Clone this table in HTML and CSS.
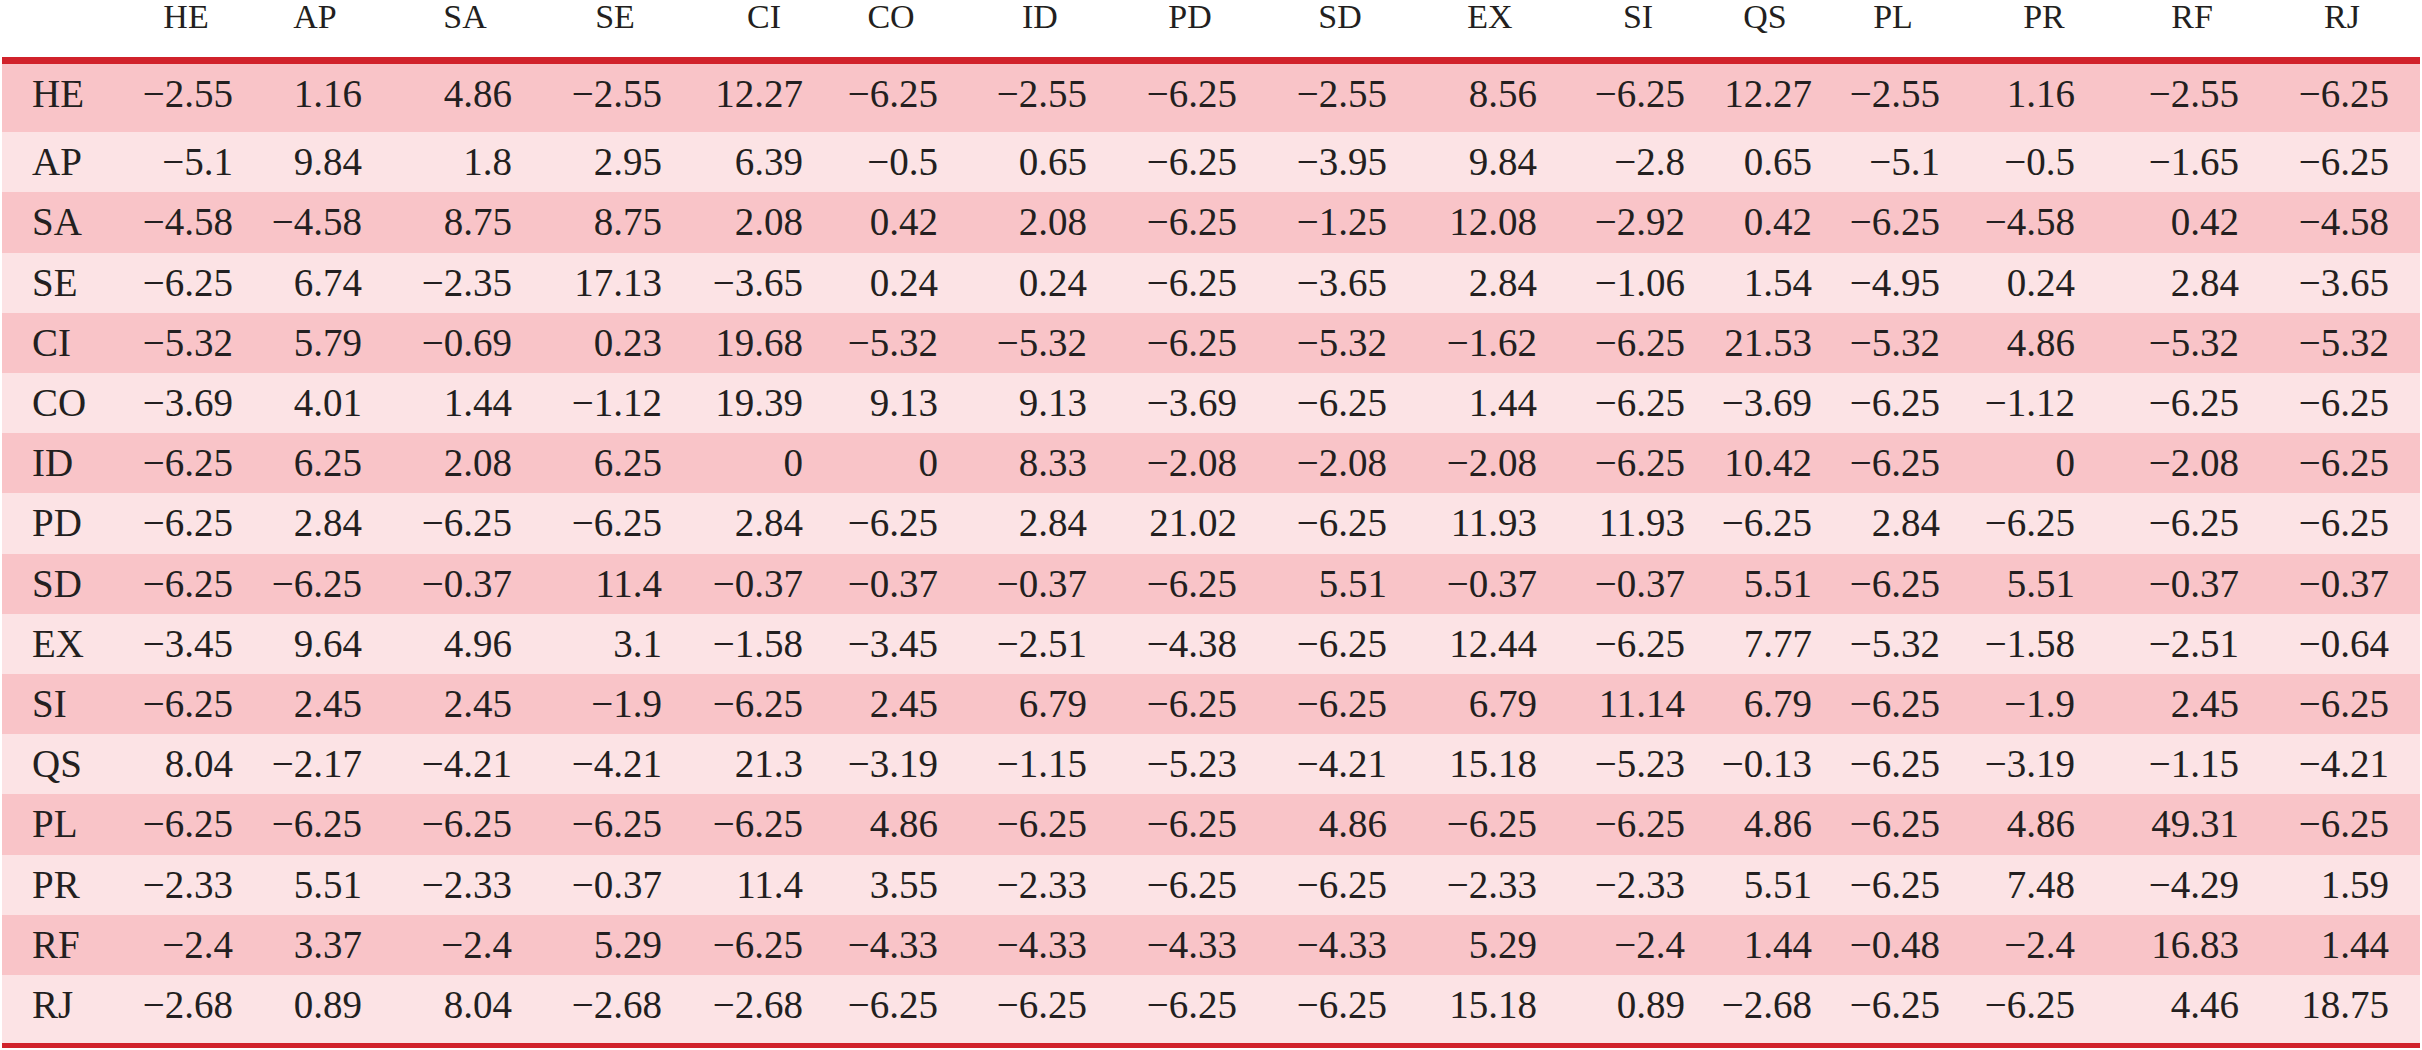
FILE: index.html
```html
<!DOCTYPE html>
<html lang="en">
<head>
<meta charset="utf-8">
<title>Matrix table</title>
<link rel="stylesheet" href="styles.css">
</head>
<body>
<div class="wrap">
<table class="matrix">
<colgroup>
<col class="c0"><col class="c1"><col class="c2"><col class="c3"><col class="c4"><col class="c5"><col class="c6"><col class="c7"><col class="c8"><col class="c9"><col class="c10"><col class="c11"><col class="c12"><col class="c13"><col class="c14"><col class="c15"><col class="c16">
</colgroup>
<thead>
<tr>
<th class="lab"></th>
<th><span class="hb">HE</span></th>
<th><span class="hb">AP</span></th>
<th><span class="hb">SA</span></th>
<th><span class="hb">SE</span></th>
<th><span class="hb hb-ci">CI</span></th>
<th><span class="hb">CO</span></th>
<th><span class="hb">ID</span></th>
<th><span class="hb">PD</span></th>
<th><span class="hb">SD</span></th>
<th><span class="hb">EX</span></th>
<th><span class="hb">SI</span></th>
<th><span class="hb">QS</span></th>
<th><span class="hb">PL</span></th>
<th><span class="hb hb-pr">PR</span></th>
<th><span class="hb">RF</span></th>
<th><span class="hb">RJ</span></th>
</tr>
</thead>
<tbody>
<tr class="dark"><td class="lab">HE</td><td>−2.55</td><td>1.16</td><td>4.86</td><td>−2.55</td><td>12.27</td><td>−6.25</td><td>−2.55</td><td>−6.25</td><td>−2.55</td><td>8.56</td><td>−6.25</td><td>12.27</td><td>−2.55</td><td>1.16</td><td>−2.55</td><td>−6.25</td></tr>
<tr class="light"><td class="lab">AP</td><td>−5.1</td><td>9.84</td><td>1.8</td><td>2.95</td><td>6.39</td><td>−0.5</td><td>0.65</td><td>−6.25</td><td>−3.95</td><td>9.84</td><td>−2.8</td><td>0.65</td><td>−5.1</td><td>−0.5</td><td>−1.65</td><td>−6.25</td></tr>
<tr class="dark"><td class="lab">SA</td><td>−4.58</td><td>−4.58</td><td>8.75</td><td>8.75</td><td>2.08</td><td>0.42</td><td>2.08</td><td>−6.25</td><td>−1.25</td><td>12.08</td><td>−2.92</td><td>0.42</td><td>−6.25</td><td>−4.58</td><td>0.42</td><td>−4.58</td></tr>
<tr class="light"><td class="lab">SE</td><td>−6.25</td><td>6.74</td><td>−2.35</td><td>17.13</td><td>−3.65</td><td>0.24</td><td>0.24</td><td>−6.25</td><td>−3.65</td><td>2.84</td><td>−1.06</td><td>1.54</td><td>−4.95</td><td>0.24</td><td>2.84</td><td>−3.65</td></tr>
<tr class="dark"><td class="lab">CI</td><td>−5.32</td><td>5.79</td><td>−0.69</td><td>0.23</td><td>19.68</td><td>−5.32</td><td>−5.32</td><td>−6.25</td><td>−5.32</td><td>−1.62</td><td>−6.25</td><td>21.53</td><td>−5.32</td><td>4.86</td><td>−5.32</td><td>−5.32</td></tr>
<tr class="light"><td class="lab">CO</td><td>−3.69</td><td>4.01</td><td>1.44</td><td>−1.12</td><td>19.39</td><td>9.13</td><td>9.13</td><td>−3.69</td><td>−6.25</td><td>1.44</td><td>−6.25</td><td>−3.69</td><td>−6.25</td><td>−1.12</td><td>−6.25</td><td>−6.25</td></tr>
<tr class="dark"><td class="lab">ID</td><td>−6.25</td><td>6.25</td><td>2.08</td><td>6.25</td><td>0</td><td>0</td><td>8.33</td><td>−2.08</td><td>−2.08</td><td>−2.08</td><td>−6.25</td><td>10.42</td><td>−6.25</td><td>0</td><td>−2.08</td><td>−6.25</td></tr>
<tr class="light"><td class="lab">PD</td><td>−6.25</td><td>2.84</td><td>−6.25</td><td>−6.25</td><td>2.84</td><td>−6.25</td><td>2.84</td><td>21.02</td><td>−6.25</td><td>11.93</td><td>11.93</td><td>−6.25</td><td>2.84</td><td>−6.25</td><td>−6.25</td><td>−6.25</td></tr>
<tr class="dark"><td class="lab">SD</td><td>−6.25</td><td>−6.25</td><td>−0.37</td><td>11.4</td><td>−0.37</td><td>−0.37</td><td>−0.37</td><td>−6.25</td><td>5.51</td><td>−0.37</td><td>−0.37</td><td>5.51</td><td>−6.25</td><td>5.51</td><td>−0.37</td><td>−0.37</td></tr>
<tr class="light"><td class="lab">EX</td><td>−3.45</td><td>9.64</td><td>4.96</td><td>3.1</td><td>−1.58</td><td>−3.45</td><td>−2.51</td><td>−4.38</td><td>−6.25</td><td>12.44</td><td>−6.25</td><td>7.77</td><td>−5.32</td><td>−1.58</td><td>−2.51</td><td>−0.64</td></tr>
<tr class="dark"><td class="lab">SI</td><td>−6.25</td><td>2.45</td><td>2.45</td><td>−1.9</td><td>−6.25</td><td>2.45</td><td>6.79</td><td>−6.25</td><td>−6.25</td><td>6.79</td><td>11.14</td><td>6.79</td><td>−6.25</td><td>−1.9</td><td>2.45</td><td>−6.25</td></tr>
<tr class="light"><td class="lab">QS</td><td>8.04</td><td>−2.17</td><td>−4.21</td><td>−4.21</td><td>21.3</td><td>−3.19</td><td>−1.15</td><td>−5.23</td><td>−4.21</td><td>15.18</td><td>−5.23</td><td>−0.13</td><td>−6.25</td><td>−3.19</td><td>−1.15</td><td>−4.21</td></tr>
<tr class="dark"><td class="lab">PL</td><td>−6.25</td><td>−6.25</td><td>−6.25</td><td>−6.25</td><td>−6.25</td><td>4.86</td><td>−6.25</td><td>−6.25</td><td>4.86</td><td>−6.25</td><td>−6.25</td><td>4.86</td><td>−6.25</td><td>4.86</td><td>49.31</td><td>−6.25</td></tr>
<tr class="light"><td class="lab">PR</td><td>−2.33</td><td>5.51</td><td>−2.33</td><td>−0.37</td><td>11.4</td><td>3.55</td><td>−2.33</td><td>−6.25</td><td>−6.25</td><td>−2.33</td><td>−2.33</td><td>5.51</td><td>−6.25</td><td>7.48</td><td>−4.29</td><td>1.59</td></tr>
<tr class="dark"><td class="lab">RF</td><td>−2.4</td><td>3.37</td><td>−2.4</td><td>5.29</td><td>−6.25</td><td>−4.33</td><td>−4.33</td><td>−4.33</td><td>−4.33</td><td>5.29</td><td>−2.4</td><td>1.44</td><td>−0.48</td><td>−2.4</td><td>16.83</td><td>1.44</td></tr>
<tr class="light"><td class="lab">RJ</td><td>−2.68</td><td>0.89</td><td>8.04</td><td>−2.68</td><td>−2.68</td><td>−6.25</td><td>−6.25</td><td>−6.25</td><td>−6.25</td><td>15.18</td><td>0.89</td><td>−2.68</td><td>−6.25</td><td>−6.25</td><td>4.46</td><td>18.75</td></tr>
</tbody>
</table>
</div>
</body>
</html>
```

FILE: styles.css
```css
html, body {
  margin: 0;
  padding: 0;
  background: #ffffff;
}

body {
  font-family: "Liberation Serif", "Times New Roman", serif;
  color: #231f20;
}

.wrap {
  padding: 0 2px;
}

.matrix {
  table-layout: fixed;
  width: 2418px;
  border-collapse: separate;
  border-spacing: 0;
}

.c0 { width: 136px; }
.c1 { width: 119px; }
.c2 { width: 129px; }
.c3 { width: 150px; }
.c4 { width: 150px; }
.c5 { width: 141px; }
.c6 { width: 135px; }
.c7 { width: 149px; }
.c8 { width: 150px; }
.c9 { width: 150px; }
.c10 { width: 150px; }
.c11 { width: 148px; }
.c12 { width: 127px; }
.c13 { width: 128px; }
.c14 { width: 135px; }
.c15 { width: 164px; }
.c16 { width: 157px; }

.matrix th {
  height: 57px;
  padding: 0 24px 0 0;
  vertical-align: top;
  font-weight: normal;
  font-size: 34px;
  line-height: 34px;
  text-align: right;
  white-space: nowrap;
}

.hb {
  display: inline-block;
  width: 94px;
  text-align: center;
}

.hb-ci { width: 78px; }
.hb-pr { width: 62px; }

.matrix td {
  padding: 0 24px 0 0;
  font-size: 39px;
  line-height: 60.2px;
  text-align: right;
  white-space: nowrap;
  vertical-align: top;
}

.matrix th:last-child,
.matrix td:last-child {
  padding-right: 31px;
}

.matrix th.lab,
.matrix td.lab {
  text-align: left;
  padding: 0 0 0 30px;
}

.matrix tbody tr:first-child td {
  border-top: 7px solid #d1222b;
  padding-bottom: 8px;
}

.matrix tbody tr:last-child td {
  border-bottom: 5px solid #d1222b;
  padding-bottom: 8px;
}

.dark td {
  background: #f9c4c8;
}

.light td {
  background: #fce3e5;
}
```
